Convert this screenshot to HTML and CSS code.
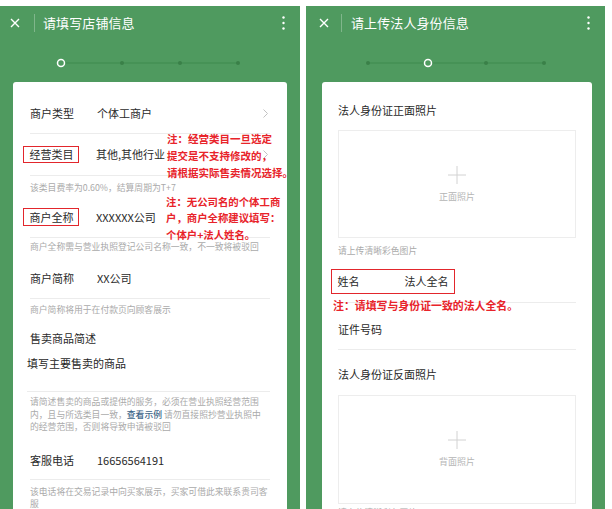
FILE: index.html
```html
<!DOCTYPE html>
<html lang="zh-CN">
<head>
<meta charset="utf-8">
<title>店铺信息</title>
<link rel="stylesheet" href="styles.css">
</head>
<body>
<div class="screens">
  <section class="panel panel--a">
    <header class="header">
      <svg class="ic-close" width="10" height="10" viewBox="0 0 10 10"><path d="M1 1L9 9M9 1L1 9" stroke="#fff" stroke-width="1.4" fill="none"/></svg>
      <span class="header-sep"></span>
      <h1 class="header-title">请填写店铺信息</h1>
      <svg class="ic-more" width="3" height="14" viewBox="0 0 3 14"><circle cx="1.5" cy="1.5" r="1.2" fill="#fff"/><circle cx="1.5" cy="7" r="1.2" fill="#fff"/><circle cx="1.5" cy="12.5" r="1.2" fill="#fff"/></svg>
    </header>
    <div class="steps">
      <svg width="300" height="42" viewBox="0 0 300 42">
        <line x1="61" y1="23" x2="238" y2="23" stroke="#3e8a4e" stroke-width="1"/>
        <circle cx="61" cy="23" r="3.5" fill="#4f9a5f" stroke="#fff" stroke-width="1.5"/>
        <circle cx="122" cy="23" r="2" fill="#3a8048"/>
        <circle cx="180" cy="23" r="2" fill="#3a8048"/>
        <circle cx="238" cy="23" r="2" fill="#3a8048"/>
      </svg>
    </div>
    <div class="card card--a">
      <div class="row row--first">
        <span class="label">商户类型</span>
        <span class="value">个体工商户</span>
        <svg class="chev" width="5" height="9" viewBox="0 0 5 9"><path d="M0.5 0.5L4.5 4.5L0.5 8.5" stroke="#c2c2c2" stroke-width="1" fill="none"/></svg>
      </div>
      <div class="row row--cat">
        <span class="label label--boxed">经营类目</span>
        <span class="value">其他,其他行业</span>
        <svg class="chev" width="5" height="9" viewBox="0 0 5 9"><path d="M0.5 0.5L4.5 4.5L0.5 8.5" stroke="#c2c2c2" stroke-width="1" fill="none"/></svg>
        <div class="note note--cat">注：经营类目一旦选定<br>提交是不支持修改的，<br>请根据实际售卖情况选择。</div>
      </div>
      <p class="hint hint--rate">该类目费率为0.60%，结算周期为T+7</p>
      <div class="row row--name">
        <span class="label label--boxed label--boxed-b">商户全称</span>
        <span class="value">XXXXXX公司</span>
        <div class="note note--name">注：无公司名的个体工商<br>户，商户全称建议填写：<br>个体户+法人姓名。</div>
      </div>
      <p class="hint hint--fullname">商户全称需与营业执照登记公司名称一致，不一致将被驳回</p>
      <div class="row row--short">
        <span class="label">商户简称</span>
        <span class="value">XX公司</span>
      </div>
      <p class="hint hint--short">商户简称将用于在付款页向顾客展示</p>
      <div class="sec-title">售卖商品简述</div>
      <div class="textarea">填写主要售卖的商品</div>
      <p class="hint hint--para">请简述售卖的商品或提供的服务，必须在营业执照经营范围<br>内，且与所选类目一致，<a class="link">查看示例</a> 请勿直接照抄营业执照中<br>的经营范围，否则将导致申请被驳回</p>
      <div class="row row--phone">
        <span class="label">客服电话</span>
        <span class="value">16656564191</span>
      </div>
      <p class="hint hint--phone">该电话将在交易记录中向买家展示，买家可借此来联系贵司客<br>服</p>
    </div>
  </section>

  <section class="panel panel--b">
    <header class="header header--b">
      <svg class="ic-close" width="10" height="10" viewBox="0 0 10 10"><path d="M1 1L9 9M9 1L1 9" stroke="#fff" stroke-width="1.4" fill="none"/></svg>
      <span class="header-sep"></span>
      <h1 class="header-title">请上传法人身份信息</h1>
      <svg class="ic-more" width="3" height="14" viewBox="0 0 3 14"><circle cx="1.5" cy="1.5" r="1.2" fill="#fff"/><circle cx="1.5" cy="7" r="1.2" fill="#fff"/><circle cx="1.5" cy="12.5" r="1.2" fill="#fff"/></svg>
    </header>
    <div class="steps">
      <svg width="299" height="42" viewBox="0 0 299 42">
        <line x1="62" y1="23" x2="238" y2="23" stroke="#3e8a4e" stroke-width="1"/>
        <circle cx="62" cy="23" r="2" fill="#3a8048"/>
        <circle cx="122" cy="23" r="3.5" fill="#4f9a5f" stroke="#fff" stroke-width="1.5"/>
        <circle cx="180" cy="23" r="2" fill="#3a8048"/>
        <circle cx="238" cy="23" r="2" fill="#3a8048"/>
      </svg>
    </div>
    <div class="card card--b">
      <div class="sec-title">法人身份证正面照片</div>
      <div class="upload">
        <svg class="plus" width="18" height="18" viewBox="0 0 18 18"><path d="M9 0V18M0 9H18" stroke="#d2d2d2" stroke-width="1" fill="none"/></svg>
        <span class="upload-text">正面照片</span>
      </div>
      <p class="hint hint--upload">请上传清晰彩色图片</p>
      <div class="row-boxed">
        <div class="name-box">
          <span class="label">姓名</span>
          <span class="value">法人全名</span>
        </div>
      </div>
      <div class="note note--id">注：请填写与身份证一致的法人全名。</div>
      <div class="row-id">证件号码</div>
      <div class="sec-title sec-title--back">法人身份证反面照片</div>
      <div class="upload upload--back">
        <svg class="plus" width="18" height="18" viewBox="0 0 18 18"><path d="M9 0V18M0 9H18" stroke="#d2d2d2" stroke-width="1" fill="none"/></svg>
        <span class="upload-text">背面照片</span>
      </div>
      <p class="hint hint--upload hint--last">请上传清晰彩色图片</p>
    </div>
  </section>
</div>
</body>
</html>
```

FILE: styles.css
```css
* { box-sizing: border-box; }
html, body {
  margin: 0;
  padding: 0;
  width: 612px;
  height: 509px;
  overflow: hidden;
  background: #fff;
  font-family: "Noto Sans CJK SC", "Noto Sans", sans-serif;
  color: #2a2a2a;
}
p { margin: 0; }
h1 { margin: 0; font-weight: normal; }

.screens {
  display: flex;
  gap: 6px;
  padding-top: 6px;
}
.panel {
  background: #4f9a5f;
  height: 503px;
  overflow: hidden;
  flex: none;
}
.panel--a { width: 300px; }
.panel--b { width: 299px; }

/* header */
.header {
  height: 34px;
  display: flex;
  align-items: center;
  padding-left: 10px;
}
.ic-close { flex: none; display: block; }
.header-sep {
  width: 1px;
  height: 18px;
  background: rgba(255,255,255,0.28);
  margin-left: 14px;
}
.header-title {
  margin-left: 8px;
  font-size: 13px;
  line-height: 18px;
  color: #fff;
  letter-spacing: 0.1px;
}
.ic-more {
  margin-left: auto;
  margin-right: 15px;
  display: block;
}
.header--b { padding-left: 13px; }
.header--b .header-sep { margin-left: 12px; }
.header--b .header-title { margin-left: 9px; }

.steps { height: 42px; }
.steps svg { display: block; }

/* card */
.card {
  background: #fff;
  border-radius: 3px;
  margin: 0 13px;
  height: 440px;
}
.card--a { padding: 11px 17px 0 17px; }
.card--b { margin-left: 16px; padding: 18px 16px 0 16px; }

.row {
  position: relative;
  display: flex;
  align-items: center;
  height: 41px;
  border-bottom: 1px solid #ececec;
  font-size: 11px;
}
.row--cat { height: 42px; }
.row--name { height: 41px; }
.row--short { margin-top: 5px; height: 41px; }
.row--phone { margin-top: 7.5px; height: 39px; }

.label {
  width: 67px;
  flex: none;
  font-size: 11px;
  line-height: 15px;
  color: #2a2a2a;
  white-space: nowrap;
}
.label--boxed {
  width: auto;
  margin-left: -7px;
  margin-right: 17px;
  border: 1.5px solid #e2262c;
  padding: 0 4.5px 0 5.5px;
  line-height: 15px;
}
.label--boxed-b { line-height: 16px; }
.value {
  font-size: 11px;
  line-height: 15px;
  color: #2a2a2a;
  white-space: nowrap;
}
.chev {
  margin-left: auto;
  margin-right: 2px;
  display: block;
  flex: none;
}

.note {
  color: #e8232a;
  font-weight: bold;
  white-space: nowrap;
}
.note--cat {
  position: absolute;
  left: 137px;
  top: -4.5px;
  font-size: 10.5px;
  line-height: 17px;
}
.note--name {
  position: absolute;
  left: 136px;
  top: -3.5px;
  font-size: 10.4px;
  line-height: 16.5px;
}

.hint {
  font-size: 8.8px;
  line-height: 12px;
  color: #aaaaaa;
  white-space: nowrap;
}
.hint--rate { margin-top: 6px; margin-bottom: 3px; }
.hint--fullname { margin-top: 3px; }
.hint--short { margin-top: 5px; }
.hint--para { margin-top: 4px; line-height: 12.5px; }
.hint--phone { margin-top: 6px; }
.link { color: #3f6689; font-weight: 500; }

.sec-title {
  font-size: 11px;
  line-height: 20px;
  color: #2a2a2a;
}
.card--a .sec-title { margin-top: 12px; }
.textarea {
  margin-top: 5px;
  margin-left: -3px;
  font-size: 11px;
  line-height: 20px;
  color: #1f1f1f;
  padding-bottom: 18px;
  border-bottom: 1px solid #ececec;
}

/* right card */
.upload {
  margin-top: 10px;
  height: 108px;
  border: 1px solid #ededed;
  display: flex;
  flex-direction: column;
  align-items: center;
  padding-top: 35px;
}
.upload--back { margin-top: 11px; height: 109px; }
.plus { display: block; }
.upload-text {
  margin-top: 7px;
  font-size: 9px;
  line-height: 12px;
  color: #b5b5b5;
}
.hint--upload { margin-top: 7px; }
.hint--last { margin-top: 3px; }

.row-boxed {
  padding-top: 10px;
  padding-bottom: 8px;
  border-bottom: 1px solid #ececec;
}
.name-box {
  display: inline-flex;
  align-items: center;
  height: 25px;
  margin-left: -7px;
  border: 1.5px solid #e2262c;
  padding: 0 5.5px;
}
.note--id {
  position: relative;
  margin-top: -5px;
  margin-left: -5px;
  font-size: 10.9px;
  line-height: 14px;
}
.row-id {
  padding-top: 7px;
  padding-bottom: 10px;
  font-size: 11px;
  line-height: 20px;
  color: #2a2a2a;
  border-bottom: 1px solid #ececec;
}
.sec-title--back { margin-top: 14px; }
```
